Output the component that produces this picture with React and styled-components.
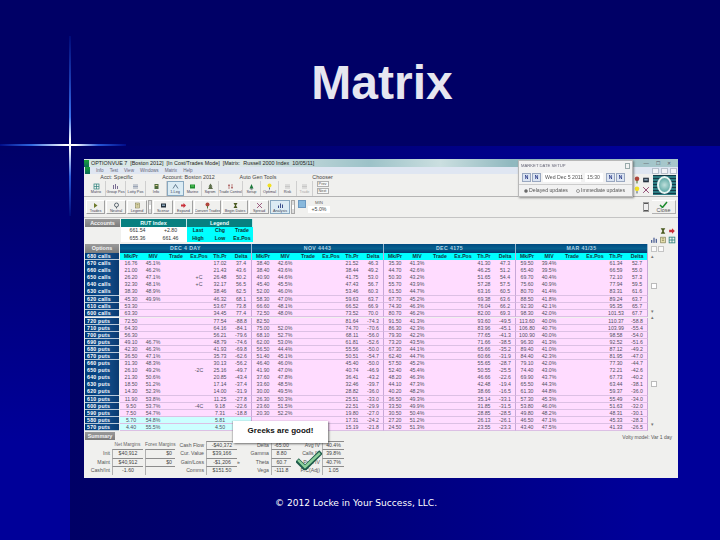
import React from "react";
import styled, { createGlobalStyle } from "styled-components";

const GlobalStyle = createGlobalStyle`
  html, body { margin: 0; padding: 0; background: #000066; }
  #root { width: 720px; height: 540px; overflow: hidden; }
`;

const COLS = ["Mk/Pr", "MIV", "Trade", "Ex.Pos", "Th.Pr", "Delta"];
const GROUPS = ["DEC 4 DAY", "NOV 4443", "DEC 4175", "MAR 41/35"];

// each group: mk iv trade expos th delta, "." = empty
const CALLS = [
  ["670 calls", "16.76 45.1% . . 17.02 37.4", "38.40 42.6% . . 21.52 46.3", "35.30 41.3% . . 41.30 47.3", "59.50 39.4% . . 61.34 52.7"],
  ["660 calls", "21.00 46.2% . . 21.43 43.6", "38.40 43.6% . . 38.44 49.2", "44.70 42.6% . . 46.25 51.2", "65.40 39.5% . . 66.59 55.0"],
  ["650 calls", "26.20 47.1% . +C 26.48 50.2", "40.90 44.6% . . 41.75 53.0", "50.30 43.2% . . 51.65 54.4", "69.70 40.4% . . 72.10 57.3"],
  ["640 calls", "32.30 48.1% . +C 32.17 56.5", "45.40 45.5% . . 47.43 56.7", "55.70 43.9% . . 57.28 57.5", "75.60 40.9% . . 77.94 59.5"],
  ["630 calls", "38.30 48.9% . . 38.46 62.5", "52.00 46.0% . . 53.46 60.3", "61.50 44.7% . . 63.16 60.5", "80.70 41.4% . . 83.31 61.6"],
  ["620 calls", "45.30 49.9% . . 46.32 68.1", "58.30 47.0% . . 59.63 63.7", "67.70 45.2% . . 69.38 63.6", "88.50 41.8% . . 89.24 63.7"],
  ["610 calls", "53.30 . . . 53.67 73.8", "66.60 48.1% . . 66.52 66.9", "74.30 46.3% . . 76.04 66.2", "92.30 42.1% . . 95.35 65.7"],
  ["600 calls", "63.30 . . . 34.45 77.4", "72.50 48.0% . . 73.52 70.0", "80.70 46.2% . . 82.00 69.3", "98.30 42.0% . . 101.53 67.7"],
];

const PUTS = [
  ["720 puts", "72.50 . . . 77.54 -88.8", "82.50 . . . 81.64 -74.3", "91.50 41.3% . . 93.60 -49.5", "113.60 40.0% . . 110.37 -58.8"],
  ["710 puts", "64.30 . . . 64.16 -84.1", "75.00 52.0% . . 74.70 -70.6", "86.30 42.3% . . 83.96 -45.1", "106.80 40.7% . . 103.99 -55.4"],
  ["700 puts", "56.30 . . . 56.21 -79.6", "68.10 52.7% . . 68.11 -56.0", "79.30 42.2% . . 77.65 -41.3", "100.90 40.0% . . 98.58 -54.0"],
  ["690 puts", "49.10 46.7% . . 48.79 -74.6", "62.00 53.0% . . 61.81 -52.6", "73.20 43.5% . . 71.66 -38.5", "96.30 41.3% . . 92.52 -51.6"],
  ["680 puts", "42.30 46.3% . . 41.93 -69.8", "56.50 44.4% . . 55.56 -50.0", "67.30 44.1% . . 65.66 -35.2", "89.40 41.0% . . 87.12 -49.2"],
  ["670 puts", "36.50 47.1% . . 35.73 -62.6", "51.40 45.1% . . 50.51 -54.7", "62.40 44.7% . . 60.66 -31.9", "84.40 42.3% . . 81.95 -47.0"],
  ["660 puts", "31.30 48.3% . . 30.13 -56.2", "46.40 46.0% . . 45.40 -50.0", "57.50 45.2% . . 55.65 -28.7", "79.10 42.0% . . 77.30 -44.7"],
  ["650 puts", "26.10 49.2% . -2C 25.16 -49.7", "41.90 47.0% . . 40.74 -46.9", "52.40 45.4% . . 50.55 -25.5", "74.40 43.0% . . 72.21 -42.6"],
  ["640 puts", "21.30 50.6% . . 20.85 -43.4", "37.60 47.8% . . 36.41 -43.2", "48.20 46.3% . . 46.66 -22.6", "69.90 43.7% . . 67.73 -40.2"],
  ["630 puts", "18.50 51.2% . . 17.14 -37.4", "33.60 48.5% . . 32.46 -39.7", "44.10 47.3% . . 42.48 -19.4", "65.50 44.3% . . 63.44 -38.1"],
  ["620 puts", "14.30 52.3% . . 14.00 -31.9", "30.00 49.5% . . 28.82 -36.0", "40.20 48.2% . . 38.66 -16.5", "61.30 44.8% . . 59.37 -36.0"],
  ["610 puts", "11.90 53.8% . . 11.25 -27.8", "26.30 50.3% . . 25.51 -33.0", "36.50 49.3% . . 35.14 -33.1", "57.30 45.3% . . 55.49 -34.0"],
  ["600 puts", "9.50 53.7% . -4C 9.18 -22.6", "23.60 51.5% . . 22.51 -29.9", "33.50 49.9% . . 31.85 -31.5", "53.80 46.0% . . 51.63 -32.0"],
  ["590 puts", "7.50 54.7% . . 7.31 -18.8", "20.30 52.2% . . 19.80 -27.0", "30.50 50.4% . . 28.85 -28.5", "49.80 48.2% . . 48.31 -30.1"],
  // the callout sits over the middle of the last two rows
  ["580 puts", "5.70 54.8% . . 5.81 .", ". . . . 17.31 -24.2", "27.20 51.2% . . 26.13 -26.1", "46.50 47.1% . . 45.33 -28.3"],
  ["570 puts", "4.40 55.5% . . 4.50 .", ". . . . 15.19 -21.8", "24.50 51.3% . . 23.55 -23.3", "43.40 47.5% . . 41.33 -26.5"],
];

const GLYPHS = {
  grid: <g fill="none" stroke="#2a7f7a" strokeWidth="1.4"><rect x="2" y="2" width="10" height="10" /><path d="M2 7h10M7 2v10" /></g>,
  pos: <g fill="none" stroke="#5a4a7a" strokeWidth="1.6"><path d="M3 12V4M7 12V2M11 12V6" /></g>,
  lot: <g fill="none" stroke="#6a7a96" strokeWidth="1.3"><path d="M2 4h10M2 7h10M2 10h10" /></g>,
  info: <g fill="#4c6a3a"><rect x="3" y="2" width="8" height="10" /><rect x="5" y="4" width="4" height="2" fill="#e8d49a" /></g>,
  leg: <g fill="none" stroke="#33506a" strokeWidth="1.4"><path d="M2 11L7 3l5 8" /></g>,
  green: <g><rect x="2" y="3" width="10" height="8" fill="#1f8f2f" /><rect x="4" y="5" width="6" height="2" fill="#66d066" /></g>,
  tree: <g fill="#5c6d4a"><path d="M7 1l4 6H9l3 5H2l3-5H3z" /></g>,
  ctrl: <g fill="none" stroke="#a04848" strokeWidth="1.3"><path d="M4 2v10M10 2v10M2 5h4M8 9h4" /></g>,
  setup: <g><path d="M7 2l4 9H3z" fill="#1c7a3c" /><rect x="5" y="11" width="4" height="2" fill="#44525e" /></g>,
  bulb: <g><circle cx="7" cy="5" r="4" fill="#f2e020" /><rect x="6" y="9" width="2" height="4" fill="#5c7080" /></g>,
  risk: <g fill="none" stroke="#b4b4b4" strokeWidth="1.4"><path d="M2 4h10M2 7h10M2 10h10" /></g>,
  flag: <g><path d="M4 2l7 5-7 5z" fill="#6e7a2c" /></g>,
  face: <g fill="none" stroke="#33424e" strokeWidth="1.5"><circle cx="7" cy="6" r="4" /><path d="M7 10v3" /></g>,
  doc: <g><rect x="3" y="2" width="8" height="10" fill="#e6e0b0" stroke="#6c6a3c" /><path d="M5 5h4M5 8h4" stroke="#6c6a3c" /></g>,
  screen: <g><rect x="2" y="3" width="10" height="8" fill="#26323e" /><rect x="4" y="5" width="6" height="3" fill="#8aa4b8" /></g>,
  arrow: <g><path d="M2 5h5V2l5 5-5 5V9H2z" fill="#c9303a" /></g>,
  convert: <g><circle cx="7" cy="5" r="4" fill="#b0463c" /><rect x="6" y="8" width="2" height="5" fill="#5c7a3c" /></g>,
  dates: <g><path d="M3 2h8l-3 5 3 5H3l3-5z" fill="#4a5a20" /></g>,
  spread: <g fill="none" stroke="#8a3c6a" strokeWidth="1.6"><path d="M2 2l10 10M12 2L2 12" /></g>,
  chart: <g fill="#3a4f8a"><rect x="2" y="7" width="2" height="5" /><rect x="6" y="3" width="2" height="9" /><rect x="10" y="5" width="2" height="7" /></g>,
};

const Glyph = ({ kind, size = 7 }) => (
  <svg width={size} height={size} viewBox="0 0 14 14">{GLYPHS[kind]}</svg>
);

const Slide = styled.div`
  position: relative;
  width: 720px;
  height: 540px;
  display: flex;
  flex-direction: column;
  overflow: hidden;
  background: #000066;
  font-family: "Liberation Sans", Arial, sans-serif;
`;

const Header = styled.header`
  height: 146px;
  flex: none;
  box-sizing: border-box;
  padding: 0 26px 0 70px;
  display: flex;
  align-items: flex-start;
  justify-content: center;
`;

const Title = styled.h1`
  margin: 55px 0 0;
  font-family: "Liberation Sans", Arial, sans-serif;
  font-size: 48px;
  line-height: 55px;
  font-weight: 700;
  color: #e6e6f0;
`;

const Body = styled.div`
  flex: 1;
  display: flex;
`;

const Rail = styled.div`
  width: 70px;
  flex: none;
  background: linear-gradient(to bottom, #000068 0%, #000099 75%);
`;

const Main = styled.main`
  flex: 1;
  box-sizing: border-box;
  padding: 13px 42px 0 14px;
  background: linear-gradient(to right, #000066 0%, #000070 30%, #000099 88%);
`;

const StarH = styled.i`
  position: absolute;
  left: 0;
  top: 144px;
  width: 126px;
  height: 2px;
  background: linear-gradient(to right, #000c88 0%, #3068e0 25%, #ffffff 52%, #ffffff 60%, #2858d8 78%, #000c88 100%);
`;

const StarV = styled.i`
  position: absolute;
  left: 69px;
  top: 36px;
  width: 2px;
  height: 180px;
  background: linear-gradient(to bottom, #000a78 0%, #1c3cb0 25%, #3a70ea 45%, #ffffff 58%, #ffffff 62%, #2858d8 78%, #000a78 100%);
`;

const Window = styled.section`
  position: relative;
  width: 594px;
  height: 319px;
  display: flex;
  flex-direction: column;
  background: #f0f0ee;
  color: #3a3a3a;
  font-size: 5px;
  line-height: 7px;
  overflow: visible;
  filter: blur(0.42px);
`;

const TitleBar = styled.div`
  height: 8px;
  flex: none;
  display: flex;
  align-items: center;
  gap: 2px;
  font-size: 5.4px;
  color: #222;
  white-space: pre;
  background: linear-gradient(to right, #d6e6e4 0%, #dfe9e8 25%, #9cc2c8 48%, #cbdfe0 60%, #8fb8bf 72%, #a8c8cc 100%);
`;

const AppIcon = styled.span`
  width: 5px;
  height: 7px;
  background: linear-gradient(to bottom, #18a038, #0c6a5a);
`;

const WinButtons = styled.span`
  margin-left: auto;
  display: flex;
  gap: 7px;
  padding-right: 7px;
  color: #556;
`;

const MenuBar = styled.div`
  height: 7px;
  flex: none;
  display: flex;
  align-items: center;
  gap: 6px;
  padding-left: 1px;
  color: #667;
  font-size: 4.6px;
  background: #dfe6f2;
`;

const MdiButtons = styled.span`
  margin-left: auto;
  display: flex;
  gap: 2px;
  padding-right: 1px;
`;

const MdiBox = styled.i`
  width: 7px;
  height: 6px;
  background: #f2f4f8;
  border: 1px solid #b8c0cc;
  box-sizing: border-box;
`;

const ToolbarOne = styled.div`
  height: 23px;
  flex: none;
  box-sizing: border-box;
  display: flex;
  padding-left: 3px;
  border-bottom: 1px solid #b4b4b4;
`;

const ToolGroup = styled.div`
  display: flex;
  flex-direction: column;
  width: ${(p) => p.$w}px;
`;

const GroupLabel = styled.div`
  height: 7px;
  text-align: center;
  font-size: 5.4px;
  padding-left: ${(p) => p.$pad || 0}px;
  white-space: nowrap;
  color: #444;
`;

const ButtonRow = styled.div`
  display: flex;
  height: 15px;
`;

const ToolButton = styled.div`
  width: ${(p) => p.$w}px;
  flex: none;
  box-sizing: border-box;
  display: flex;
  flex-direction: column;
  align-items: center;
  justify-content: center;
  font-size: 3.8px;
  line-height: 4px;
  color: ${(p) => (p.$dim ? "#aaa" : "#445")};
  white-space: nowrap;
  overflow: hidden;
  border-right: 1px solid ${(p) => (p.$raised ? "#a0a0a0" : "#cfcfcf")};
  border-bottom: ${(p) => (p.$raised ? "1px solid #a0a0a0" : "0")};
  border-left: ${(p) => (p.$raised ? "1px solid #fff" : "0")};
  border-top: ${(p) => (p.$raised ? "1px solid #fff" : "0")};
  background: ${(p) => (p.$active ? "#dcecf4" : "transparent")};
  outline: ${(p) => (p.$active ? "1px solid #88a8c0" : "none")};
  outline-offset: -1px;
`;

const SmallKey = styled.span`
  display: block;
  width: 12px;
  height: 6px;
  box-sizing: border-box;
  border: 1px solid #b0b0b0;
  background: #f8f8f8;
  font-size: 3.8px;
  line-height: 4px;
  text-align: center;
  color: #555;
  margin-bottom: 1px;
`;

const Chooser = styled.div`
  width: 17px;
  display: flex;
  flex-direction: column;
  align-items: center;
`;

const RightCluster = styled.div`
  margin-left: auto;
  display: flex;
  align-items: center;
  gap: 3px;
  padding-right: 2px;
`;

const MiniGrid = styled.div`
  display: grid;
  grid-template-columns: 8px 8px;
  gap: 2px 1px;
`;

const Logo = styled.div`
  width: 23px;
  height: 20px;
  display: flex;
  align-items: center;
  justify-content: center;
  background: repeating-linear-gradient(to bottom, #143a48 0 1px, #2c7c82 1px 3px);
`;

const LogoRing = styled.div`
  width: 15px;
  height: 18px;
  border-radius: 50%;
  box-sizing: border-box;
  border: 2px solid #e6f4f2;
  background: radial-gradient(circle, #bfe0dc 0%, #5ea8a4 80%);
`;

const ToolbarTwo = styled.div`
  height: 21px;
  flex: none;
  box-sizing: border-box;
  display: flex;
  align-items: flex-start;
  gap: 1px;
  padding: 3px 2px 0 2px;
  border-bottom: 1px solid #c4c4c4;

  ${ToolButton} { height: 14px; }
`;

const Spin = styled.div`
  width: 4px;
  height: 14px;
  flex: none;
  box-sizing: border-box;
  border: 1px solid #a8a8a8;
  background: linear-gradient(to bottom, #ddd 0 30%, #fff 30% 70%, #ddd 70%);
`;

const BlueSquare = styled.div`
  width: 8px;
  height: 8px;
  flex: none;
  margin: 0 1px 0 2px;
  background: #88b8dc;
  border: 1px solid #6c98c0;
  box-sizing: border-box;
`;

const MinField = styled.div`
  width: 22px;
  font-size: 4.4px;
  line-height: 5px;
  text-align: center;
  color: #666;
`;

const MinValue = styled.div`
  margin-top: 1px;
  background: #fff;
  height: 7px;
  font-size: 5.2px;
  line-height: 7px;
  color: #444;
`;

const CloseCluster = styled.div`
  margin-left: auto;
  display: flex;
  align-items: center;
  gap: 3px;
`;

const Stepper = styled.div`
  width: 6px;
  height: 10px;
  box-sizing: border-box;
  border: 1px solid #999;
  background: linear-gradient(to bottom, #555 0 15%, #eee 15% 45%, #666 45% 55%, #eee 55% 85%, #555 85%);
`;

const CloseButton = styled.div`
  width: 24px;
  height: 14px;
  box-sizing: border-box;
  border-top: 1px solid #fff;
  border-right: 1px solid #b0b0b0;
  border-bottom: 1px solid #b0b0b0;
  display: flex;
  flex-direction: column;
  align-items: center;
  font-size: 5.4px;
  line-height: 5px;
  color: #555;
`;

const InfoRow = styled.div`
  height: 26px;
  flex: none;
  box-sizing: border-box;
  padding: 1px 2px 0 1px;
  display: flex;
  align-items: flex-start;
`;

const GrayTab = styled.div`
  width: 35px;
  height: 8px;
  flex: none;
  margin-right: 1px;
  background: linear-gradient(to bottom, #9a9a9a, #7c7c7c);
  color: #f4f4f4;
  font-size: 5.4px;
  font-weight: 700;
  line-height: 8px;
  text-align: center;
`;

const InfoCard = styled.div`
  width: ${(p) => p.$w}px;
  flex: none;
`;

const TealHead = styled.div`
  height: 8px;
  background: #078080;
  color: #eaffff;
  font-size: 5.4px;
  font-weight: 700;
  line-height: 8px;
  text-align: center;
  border-right: 1px solid #c8e8e8;
`;

const InfoCells = styled.div`
  display: grid;
  grid-template-columns: repeat(${(p) => p.$cols}, 1fr);
  height: 15px;
  background: ${(p) => p.$bg};
  font-size: 5.2px;
  line-height: 7.5px;
  text-align: center;
  color: ${(p) => p.$ink};
  font-weight: ${(p) => p.$weight || 400};
`;

const CornerIcons = styled.div`
  margin: 8px 0 0 auto;
  display: flex;
  flex-direction: column;
  align-items: flex-end;
  gap: 1px;
`;

const IconLine = styled.div`
  display: flex;
  gap: 1px;
`;

const TableArea = styled.div`
  display: flex;
  flex: none;
`;

const Matrix = styled.div`
  width: 564px;
  flex: none;
  padding-left: 1px;
  box-sizing: content-box;
`;

const Row = styled.div`
  display: grid;
  grid-template-columns: 35px repeat(4, 132px);
  column-gap: 0;
  height: ${(p) => p.$h || 7.1}px;
`;

const SideLabel = styled.div`
  margin-right: 1px;
  padding-left: 2px;
  background: linear-gradient(to right, #003a78, #12508e 60%, #0a3a70);
  border-bottom: 1px solid #b8c8d8;
  box-sizing: border-box;
  color: #fff;
  font-weight: 700;
  font-size: 5.2px;
  line-height: 6.4px;
  letter-spacing: 0.25px;
  white-space: nowrap;
`;

const OptionsTab = styled(GrayTab)`
  height: 9px;
  width: auto;
  line-height: 9px;
`;

const Band = styled.div`
  background: linear-gradient(to bottom, #004a80, #06608e 50%, #003c70);
  border-right: 1px solid #9ab8d0;
  color: #b4d4e6;
  font-size: 5.2px;
  font-weight: 700;
  line-height: 9px;
  text-align: center;
  letter-spacing: 0.4px;
`;

const Group = styled.div`
  display: grid;
  grid-template-columns: 22px 22px 24px 22px 20px 22px;
  box-sizing: border-box;
  background: ${(p) => p.$bg};
  border-right: 1px solid #c8a8d8;
  border-bottom: 1px solid #dcc0e4;
  color: #50505e;
  font-size: 5.2px;
  line-height: 6.2px;
  text-align: center;
  white-space: nowrap;
`;

const HeadGroup = styled(Group)`
  border-bottom: 0;
  color: #134;
  font-weight: 700;
  line-height: 7px;
`;

const RowGap = styled.div`
  height: 0.7px;
`;

const SideRail = styled.div`
  flex: 1;
  position: relative;
  display: flex;
  flex-direction: column;
  padding-left: 2px;
`;

const ScrollKeys = styled.div`
  display: flex;
  gap: 1px;
  margin-top: 2px;
`;

const ScrollKey = styled.i`
  width: 6px;
  height: 6px;
  box-sizing: border-box;
  border: 1px solid #c4c4c4;
  background: #fafafa;
`;

const ScrollMark = styled.span`
  margin-top: ${(p) => p.$top}px;
  font-size: 5px;
  line-height: 4px;
  color: #777;
`;

const ScrollThumb = styled.i`
  display: block;
  margin-top: ${(p) => p.$top}px;
  width: 6px;
  height: 6px;
  box-sizing: border-box;
  border: 1px solid #bbb;
  background: #fff;
`;

const SummaryBar = styled.div`
  height: 9px;
  flex: none;
  margin-top: 1px;
  padding: 0 6px 0 1px;
  display: flex;
  justify-content: space-between;
  align-items: flex-start;
`;

const SummaryTab = styled(GrayTab)`
  width: 30px;
`;

const Note = styled.div`
  font-size: 5px;
  color: #555;
  margin-top: 2px;
`;

const SummaryPanel = styled.div`
  flex: 1;
  display: flex;
  padding-left: 1px;
`;

const SummaryGrid = styled.div`
  display: grid;
  grid-template-columns: ${(p) => p.$cols};
  grid-auto-rows: 8.4px;
  column-gap: 2px;
  margin-right: ${(p) => p.$mr || 0}px;
  font-size: 5.2px;
  line-height: 8px;
  color: #555;
`;

const SumLabel = styled.div`
  text-align: right;
  white-space: nowrap;
`;

const SumHead = styled.div`
  text-align: center;
  font-size: 4.8px;
  white-space: nowrap;
  color: #666;
`;

const SumValue = styled.div`
  text-align: ${(p) => (p.$right ? "right" : "center")};
  padding-right: ${(p) => (p.$right ? 3 : 0)}px;
  border-top: 1px solid #8c8c8c;
  border-left: 1px solid #b0b0b0;
  box-sizing: border-box;
  color: #444;
  line-height: 7px;
  white-space: nowrap;
`;

const Chevron = styled.div`
  width: 7px;
  padding-top: 17px;
  margin-right: 4px;
  color: #444;
  font-size: 5px;
  line-height: 8px;
`;

const Callout = styled.div`
  position: absolute;
  left: 149px;
  top: 262px;
  width: 95px;
  height: 22px;
  background: #fff;
  box-shadow: 1px 1px 2px rgba(60, 60, 60, 0.7), -1px 0 1px rgba(120, 120, 120, 0.3);
  color: #111;
  font-size: 8px;
  font-weight: 700;
  line-height: 19px;
  text-align: center;
`;

const CheckMark = styled.svg`
  position: absolute;
  left: 212px;
  top: 291px;
`;

const Dialog = styled.div`
  position: absolute;
  left: 434px;
  top: 1px;
  width: 115px;
  height: 37px;
  box-sizing: border-box;
  background: #f2f2f2;
  border: 1px solid #b8b8b8;
  box-shadow: 1px 1px 2px rgba(70, 70, 70, 0.6);
  display: flex;
  flex-direction: column;
  font-size: 5px;
  color: #555;
`;

const DialogTitle = styled.div`
  height: 9px;
  display: flex;
  align-items: center;
  justify-content: space-between;
  padding: 0 2px;
  font-size: 4.2px;
  color: #667;
`;

const DialogClose = styled.i`
  width: 5px;
  height: 6px;
  border: 1px solid #9aa;
  box-sizing: border-box;
`;

const DialogDate = styled.div`
  height: 14px;
  display: flex;
  align-items: center;
  gap: 1px;
  padding: 0 3px;
  border-bottom: 1px solid #ccc;
`;

const NavKey = styled.span`
  width: 9px;
  height: 9px;
  box-sizing: border-box;
  background: #dbe4f2;
  border: 1px solid #9aa8c0;
  color: #2c3c88;
  font-size: 5px;
  font-weight: 700;
  line-height: 7px;
  text-align: center;
  margin-left: ${(p) => p.$gap || 0}px;
`;

const DateField = styled.span`
  background: #fff;
  height: 9px;
  line-height: 9px;
  width: ${(p) => p.$w}px;
  margin-left: ${(p) => p.$gap || 0}px;
  padding-left: 2px;
  font-size: 5.2px;
  white-space: nowrap;
`;

const DialogOptions = styled.div`
  flex: 1;
  display: flex;
  align-items: center;
  gap: 8px;
  padding-left: 5px;
  font-size: 5.2px;
`;

const Radio = styled.span`
  display: flex;
  align-items: center;
  gap: 1px;
  white-space: nowrap;

  &::before {
    content: "";
    width: 4px;
    height: 4px;
    border-radius: 50%;
    box-sizing: border-box;
    border: 1px solid #999;
    background: ${(p) => (p.$on ? "#555" : "#fff")};
  }
`;

const Footer = styled.footer`
  width: 544px;
  margin-top: 19px;
  text-align: center;
  font-family: "DejaVu Sans", Verdana, sans-serif;
  font-size: 9.1px;
  line-height: 12px;
  color: #fff;
`;

const Cells = ({ text }) =>
  text.split(" ").map((v, i) => <span key={i}>{v === "." ? "" : v}</span>);

const OptionRow = ({ row, tint }) => (
  <Row>
    <SideLabel>{row[0]}</SideLabel>
    {row.slice(1).map((g, i) => (
      <Group key={i} $bg={tint && i === 0 ? "#ccffff" : "#ffdcff"}>
        <Cells text={g} />
      </Group>
    ))}
  </Row>
);

const TOOLS_A = [["grid", "Matrix", 19], ["pos", "Group Pos", 20], ["lot", "Lotty Pos", 20]];
const TOOLS_B = [["info", "Info", 21], ["leg", "1-Leg", 17], ["green", "Marine", 18], ["tree", "Sqrsm", 17]];
const TOOLS_C = [["ctrl", "Trade Control", 24], ["setup", "Setup", 18], ["bulb", "Optimal", 18], ["risk", "Risk", 18]];
const TOOLS_TWO = [
  ["flag", "Trades", 19], ["face", "Neutral", 20], ["doc", "Legend", 20], null,
  ["screen", "Scenar", 20], ["arrow", "Expand", 19], ["convert", "Convert Trades", 27],
  ["dates", "Begin Dates", 26], ["spread", "Spread", 20], ["chart", "Analysis", 20],
];

const Tool = ({ t, ...rest }) => (
  <ToolButton $w={t[2]} {...rest}>
    <Glyph kind={t[0]} />
    {t[1]}
  </ToolButton>
);

export default function App() {
  return (
    <Slide>
      <GlobalStyle />
      <Header>
        <Title>Matrix</Title>
      </Header>
      <Body>
        <Rail />
        <Main>
          <Window>
            <TitleBar>
              <AppIcon />
              OPTIONVUE 7  [Boston 2012]  [In Cost/Trades Mode]  [Matrix:  Russell 2000 Index  10/05/11]
              <WinButtons><span>—</span><span>☐</span><span>✕</span></WinButtons>
            </TitleBar>
            <MenuBar>
              <AppIcon />
              <span>Info</span><span>Test</span><span>View</span><span>Windows</span><span>Matrix</span><span>Help</span>
              <MdiButtons><MdiBox /><MdiBox /><MdiBox /></MdiButtons>
            </MenuBar>

            <ToolbarOne>
              <ToolGroup $w={59}>
                <GroupLabel>Acct: Specific</GroupLabel>
                <ButtonRow>{TOOLS_A.map((t) => <Tool key={t[1]} t={t} />)}</ButtonRow>
              </ToolGroup>
              <ToolGroup $w={73}>
                <GroupLabel $pad={12}>Account: Boston 2012</GroupLabel>
                <ButtonRow>
                  {TOOLS_B.map((t) => <Tool key={t[1]} t={t} $active={t[1] === "1-Leg"} />)}
                </ButtonRow>
              </ToolGroup>
              <ToolGroup $w={78}>
                <GroupLabel>Auto Gen Tools</GroupLabel>
                <ButtonRow>{TOOLS_C.map((t) => <Tool key={t[1]} t={t} />)}</ButtonRow>
              </ToolGroup>
              <ToolGroup $w={17}>
                <GroupLabel />
                <ButtonRow>
                  <ToolButton $w={16} $dim>
                    <Glyph kind="risk" />
                    Trade
                  </ToolButton>
                </ButtonRow>
              </ToolGroup>
              <Chooser>
                <GroupLabel>Chooser</GroupLabel>
                <SmallKey>Prev</SmallKey>
                <SmallKey>Next</SmallKey>
              </Chooser>
              <RightCluster>
                <MiniGrid>
                  <Glyph kind="convert" size={8} />
                  <Glyph kind="screen" size={8} />
                  <Glyph kind="bulb" size={8} />
                  <Glyph kind="spread" size={8} />
                </MiniGrid>
                <Logo><LogoRing /></Logo>
              </RightCluster>
            </ToolbarOne>

            <ToolbarTwo>
              {TOOLS_TWO.map((t, i) =>
                t ? <Tool key={t[1]} t={t} $raised $active={t[1] === "Analysis"} /> : <Spin key={i} />
              )}
              <Spin />
              <BlueSquare />
              <MinField>
                MIN
                <MinValue>+5.0%</MinValue>
              </MinField>
              <CloseCluster>
                <Stepper />
                <CloseButton>
                  <svg width="9" height="7" viewBox="0 0 9 7">
                    <path d="M1 4l2.5 2.5L8 1" fill="none" stroke="#1c8a2c" strokeWidth="1.5" />
                  </svg>
                  Close
                </CloseButton>
              </CloseCluster>
            </ToolbarTwo>

            <InfoRow>
              <GrayTab>Accounts</GrayTab>
              <InfoCard $w={66}>
                <TealHead>RUT Index</TealHead>
                <InfoCells $cols={2} $bg="#ffffff" $ink="#333">
                  <span>661.54</span><span>+2.80</span>
                  <span>655.36</span><span>661.46</span>
                </InfoCells>
              </InfoCard>
              <InfoCard $w={66}>
                <TealHead>Legend</TealHead>
                <InfoCells $cols={3} $bg="#00ffff" $ink="#103030" $weight={700}>
                  <span>Last</span><span>Chg</span><span>Trade</span>
                  <span>High</span><span>Low</span><span>Ex.Pos</span>
                </InfoCells>
              </InfoCard>
              <CornerIcons>
                <IconLine><Glyph kind="dates" size={8} /><Glyph kind="arrow" size={8} /></IconLine>
                <IconLine><Glyph kind="chart" size={8} /><Glyph kind="doc" size={8} /><Glyph kind="grid" size={8} /></IconLine>
              </CornerIcons>
            </InfoRow>

            <TableArea>
              <Matrix>
                <Row $h={9}>
                  <OptionsTab as="div">Options</OptionsTab>
                  {GROUPS.map((g) => <Band key={g}>{g}</Band>)}
                </Row>
                <Row>
                  <SideLabel>680 calls</SideLabel>
                  {GROUPS.map((g) => (
                    <HeadGroup key={g} $bg="#00ffff">
                      {COLS.map((c) => <span key={c}>{c}</span>)}
                    </HeadGroup>
                  ))}
                </Row>
                {CALLS.map((r) => <OptionRow key={r[0]} row={r} />)}
                <RowGap />
                {PUTS.map((r) => (
                  <OptionRow key={r[0]} row={r} tint={r[0] === "580 puts" || r[0] === "570 puts"} />
                ))}
              </Matrix>
              <SideRail>
                <ScrollKeys><ScrollKey /><ScrollKey /></ScrollKeys>
                <ScrollMark $top={2}>▴</ScrollMark>
                <ScrollThumb $top={25} />
                <ScrollMark $top={20}>▾</ScrollMark>
                <ScrollMark $top={2}>▴</ScrollMark>
                <ScrollThumb $top={62} />
                <ScrollMark $top={35}>▾</ScrollMark>
              </SideRail>
            </TableArea>

            <SummaryBar>
              <SummaryTab>Summary</SummaryTab>
              <Note>Volty model: Var 1 day</Note>
            </SummaryBar>

            <SummaryPanel>
              <SummaryGrid $cols="25px 31px 30px" $mr={4}>
                <span />
                <SumHead>Net Margins</SumHead>
                <SumHead>Forex Margins</SumHead>
                <SumLabel>Init</SumLabel>
                <SumValue>$40,912</SumValue>
                <SumValue $right>$0</SumValue>
                <SumLabel>Maint</SumLabel>
                <SumValue>$40,912</SumValue>
                <SumValue $right>$0</SumValue>
                <SumLabel>Cash/Int</SumLabel>
                <SumValue>-1.60</SumValue>
                <SumValue />
              </SummaryGrid>
              <SummaryGrid $cols="25px 31px">
                <SumLabel>Cash Flow</SumLabel>
                <SumValue>-$40,372</SumValue>
                <SumLabel>Cur. Value</SumLabel>
                <SumValue>$39,166</SumValue>
                <SumLabel>Gain/Loss</SumLabel>
                <SumValue>-$1,206</SumValue>
                <SumLabel>Comms</SumLabel>
                <SumValue>$151.50</SumValue>
              </SummaryGrid>
              <Chevron>»</Chevron>
              <SummaryGrid $cols="21px 20px" $mr={9}>
                <SumLabel>Delta</SumLabel>
                <SumValue>-65.00</SumValue>
                <SumLabel>Gamma</SumLabel>
                <SumValue>8.80</SumValue>
                <SumLabel>Theta</SumLabel>
                <SumValue>60.7</SumValue>
                <SumLabel>Vega</SumLabel>
                <SumValue>-111.8</SumValue>
              </SummaryGrid>
              <SummaryGrid $cols="20px 22px">
                <SumLabel>Avg IV</SumLabel>
                <SumValue>40.4%</SumValue>
                <SumLabel>Calls IV</SumLabel>
                <SumValue>39.8%</SumValue>
                <SumLabel>Puts IV</SumLabel>
                <SumValue>40.7%</SumValue>
                <SumLabel>P/C(Adj)</SumLabel>
                <SumValue>1.05</SumValue>
              </SummaryGrid>
            </SummaryPanel>

            <Callout>Greeks are good!</Callout>
            <CheckMark width="26" height="20" viewBox="0 0 26 20">
              <path d="M1 10l8 8L25 2" fill="none" stroke="#1d5a4a" strokeWidth="5" />
              <path d="M2 10l7 7L24 3" fill="none" stroke="#8ccf9a" strokeWidth="2.4" />
            </CheckMark>

            <Dialog>
              <DialogTitle>
                MARKET DATE SETUP
                <DialogClose />
              </DialogTitle>
              <DialogDate>
                <NavKey>N</NavKey>
                <NavKey>N</NavKey>
                <DateField $w={36} $gap={1}>Wed Dec 5 2011</DateField>
                <DateField $w={16} $gap={3}>15:30</DateField>
                <NavKey $gap={2}>N</NavKey>
                <NavKey>N</NavKey>
              </DialogDate>
              <DialogOptions>
                <Radio $on>Delayed updates</Radio>
                <Radio>Immediate updates</Radio>
              </DialogOptions>
            </Dialog>
          </Window>
          <Footer>© 2012 Locke in Your Success, LLC.</Footer>
        </Main>
      </Body>
      <StarH />
      <StarV />
    </Slide>
  );
}
